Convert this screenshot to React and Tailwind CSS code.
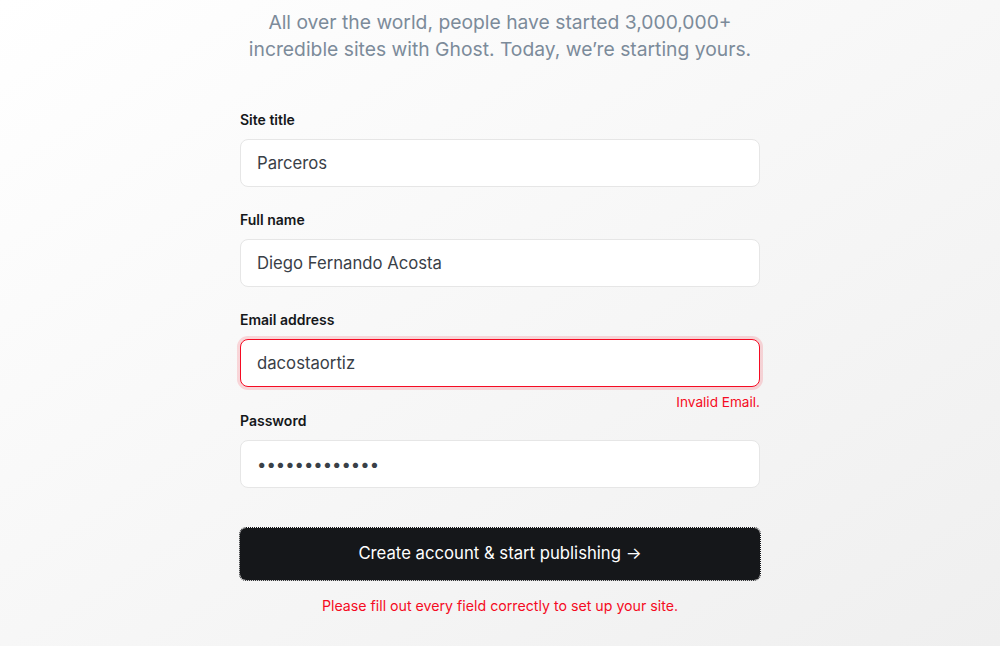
import { useState } from 'react';

const fields = [
  { label: 'Site title', value: 'Parceros', type: 'text' },
  { label: 'Full name', value: 'Diego Fernando Acosta', type: 'text' },
  { label: 'Email address', value: 'dacostaortiz', type: 'text', error: 'Invalid Email.' },
  { label: 'Password', value: 'parceros12345', type: 'password' },
];

function Field({ label, value, type, error }) {
  const [val, setVal] = useState(value);
  return (
    <div className="flex flex-col">
      <label className="text-[14px] leading-5 font-semibold text-[#15171a] mb-[9px]">{label}</label>
      <input
        type={type}
        value={val}
        onChange={(e) => setVal(e.target.value)}
        className={`h-12 w-full rounded-lg bg-white px-[16px] text-[16.7px] text-[#394047] outline-none ${
          error
            ? 'border border-[#f50b23] ring-[3px] ring-[#f50b23]/15'
            : 'border border-[#e6e6e6]'
        }`}
      />
      {error ? (
        <p className="mt-[6px] -mb-[23px] h-[18px] text-right text-[13.6px] leading-[18px] text-[#f50b23]">{error}</p>
      ) : null}
    </div>
  );
}

export default function App() {
  return (
    <div
      className="min-h-screen w-full bg-gradient-to-br from-[#ffffff] to-[#efefef]"
      style={{ fontFamily: 'Inter, "Noto Sans", sans-serif' }}
    >
      <div className="mx-auto w-[520px] pt-[9px]">
        <p className="text-center text-[19.3px] leading-[27px] text-[#7c8b9a]">
          All over the world, people have started 3,000,000+ incredible sites with Ghost. Today, we’re starting yours.
        </p>

        <form className="mt-[47px] flex flex-col gap-[23px]" onSubmit={(e) => e.preventDefault()}>
          {fields.map((f) => (
            <Field key={f.label} {...f} />
          ))}
        </form>

        <button
          type="button"
          className="mt-[40px] flex h-[52px] w-full items-center justify-center rounded-md bg-[#15171a] text-[16.7px] text-white outline-1 outline-dotted outline-[#15171a] outline-offset-0"
        >
          Create account &amp; start publishing →
        </button>

        <p className="mt-[16px] text-center text-[14.2px] leading-5 text-[#f50b23]">
          Please fill out every field correctly to set up your site.
        </p>
      </div>
    </div>
  );
}
